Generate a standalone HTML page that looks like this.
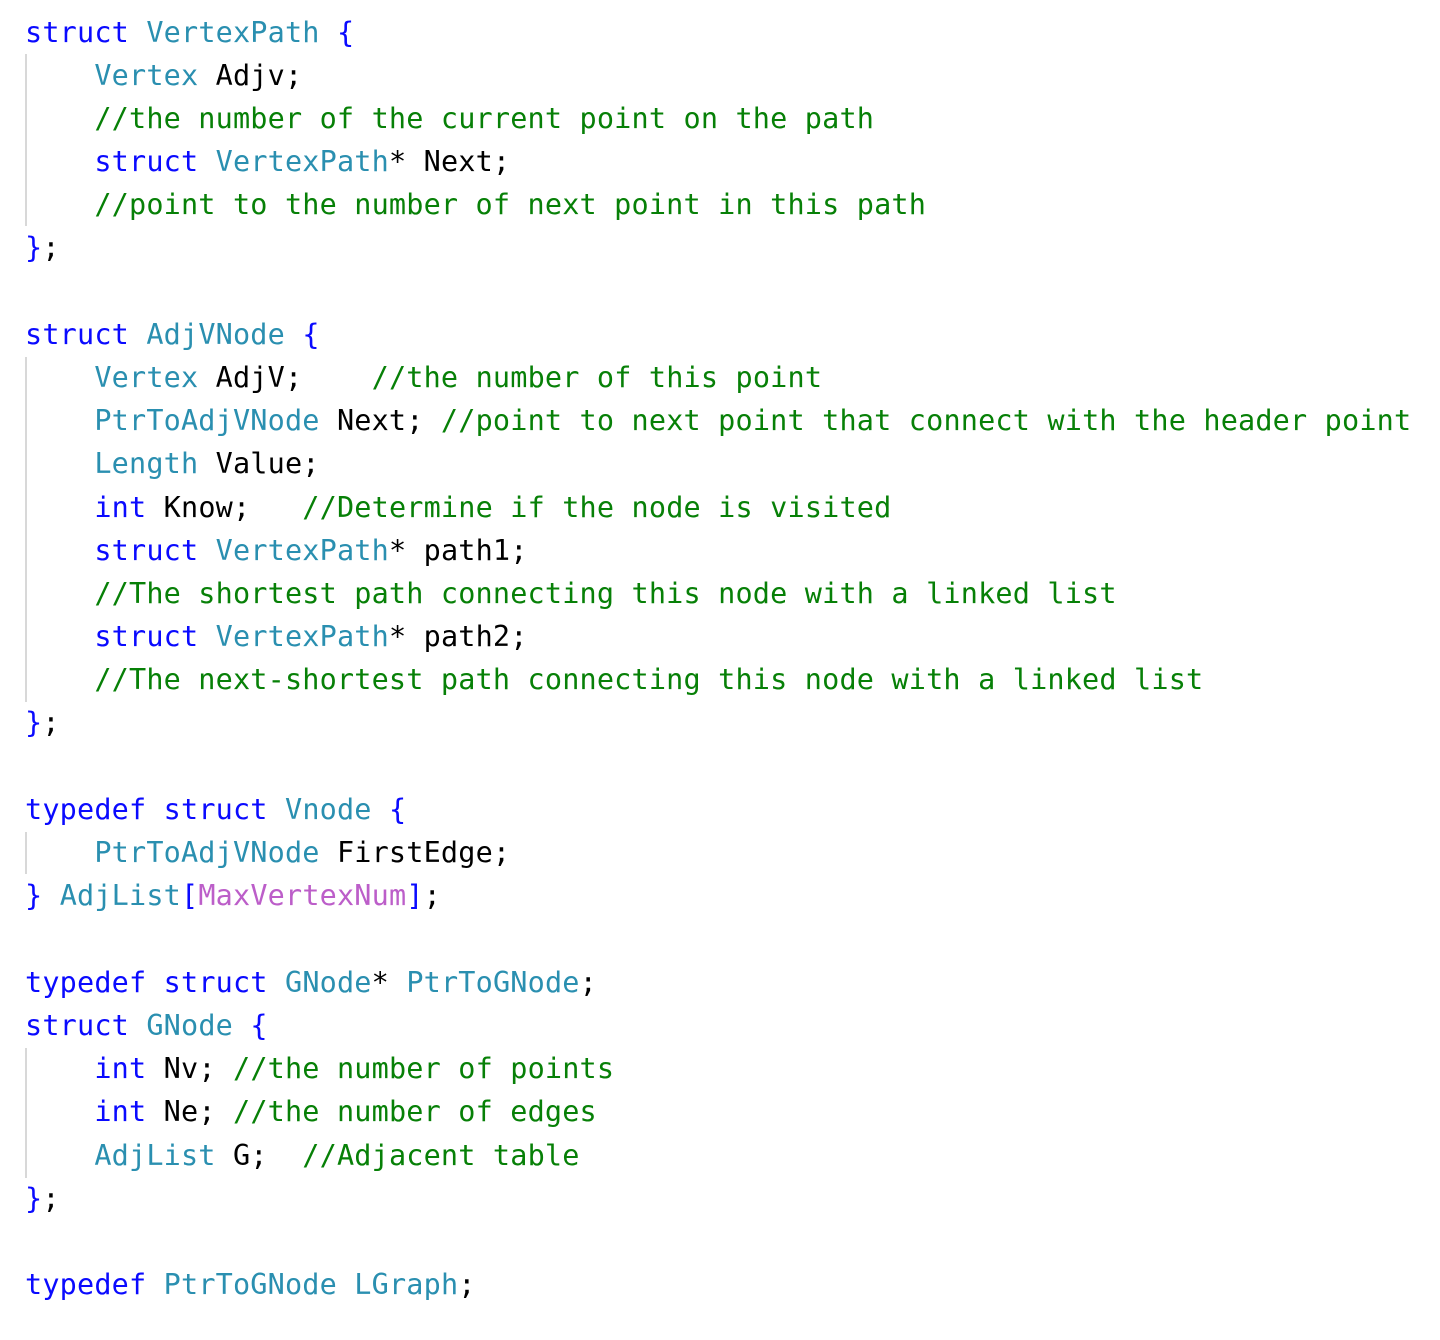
<!DOCTYPE html>
<html><head><meta charset="utf-8"><style>
html,body{margin:0;padding:0;background:#fff;width:1440px;height:1340px;overflow:hidden}
.l{position:absolute;left:25px;height:43px;line-height:43px;font-family:"DejaVu Sans Mono","Liberation Mono",monospace;font-size:28.5px;color:#000;white-space:pre;letter-spacing:0.17px}
.k{color:#0a0aff}.t{color:#2a8fb0}.c{color:#078007}.m{color:#bc5ec9}
.g{position:absolute;left:25px;width:2px;background:#d8d8d8}
</style></head><body>
<div class="g" style="top:54px;height:172px"></div>
<div class="g" style="top:357px;height:345px"></div>
<div class="g" style="top:832px;height:42px"></div>
<div class="g" style="top:1048px;height:130px"></div>
<div class="l" style="top:11px"><span class="k">struct</span> <span class="t">VertexPath</span> <span class="k">{</span></div>
<div class="l" style="top:54px">    <span class="t">Vertex</span> Adjv;</div>
<div class="l" style="top:97px">    <span class="c">//the number of the current point on the path</span></div>
<div class="l" style="top:140px">    <span class="k">struct</span> <span class="t">VertexPath</span>* Next;</div>
<div class="l" style="top:183px">    <span class="c">//point to the number of next point in this path</span></div>
<div class="l" style="top:226px"><span class="k">}</span>;</div>
<div class="l" style="top:313px"><span class="k">struct</span> <span class="t">AdjVNode</span> <span class="k">{</span></div>
<div class="l" style="top:356px">    <span class="t">Vertex</span> AdjV;    <span class="c">//the number of this point</span></div>
<div class="l" style="top:399px">    <span class="t">PtrToAdjVNode</span> Next; <span class="c">//point to next point that connect with the header point</span></div>
<div class="l" style="top:442px">    <span class="t">Length</span> Value;</div>
<div class="l" style="top:486px">    <span class="k">int</span> Know;   <span class="c">//Determine if the node is visited</span></div>
<div class="l" style="top:529px">    <span class="k">struct</span> <span class="t">VertexPath</span>* path1;</div>
<div class="l" style="top:572px">    <span class="c">//The shortest path connecting this node with a linked list</span></div>
<div class="l" style="top:615px">    <span class="k">struct</span> <span class="t">VertexPath</span>* path2;</div>
<div class="l" style="top:658px">    <span class="c">//The next-shortest path connecting this node with a linked list</span></div>
<div class="l" style="top:701px"><span class="k">}</span>;</div>
<div class="l" style="top:788px"><span class="k">typedef</span> <span class="k">struct</span> <span class="t">Vnode</span> <span class="k">{</span></div>
<div class="l" style="top:831px">    <span class="t">PtrToAdjVNode</span> FirstEdge;</div>
<div class="l" style="top:874px"><span class="k">}</span> <span class="t">AdjList</span><span class="k">[</span><span class="m">MaxVertexNum</span><span class="k">]</span>;</div>
<div class="l" style="top:961px"><span class="k">typedef</span> <span class="k">struct</span> <span class="t">GNode</span>* <span class="t">PtrToGNode</span>;</div>
<div class="l" style="top:1004px"><span class="k">struct</span> <span class="t">GNode</span> <span class="k">{</span></div>
<div class="l" style="top:1047px">    <span class="k">int</span> Nv; <span class="c">//the number of points</span></div>
<div class="l" style="top:1090px">    <span class="k">int</span> Ne; <span class="c">//the number of edges</span></div>
<div class="l" style="top:1134px">    <span class="t">AdjList</span> G;  <span class="c">//Adjacent table</span></div>
<div class="l" style="top:1177px"><span class="k">}</span>;</div>
<div class="l" style="top:1263px"><span class="k">typedef</span> <span class="t">PtrToGNode</span> <span class="t">LGraph</span>;</div>
</body></html>
